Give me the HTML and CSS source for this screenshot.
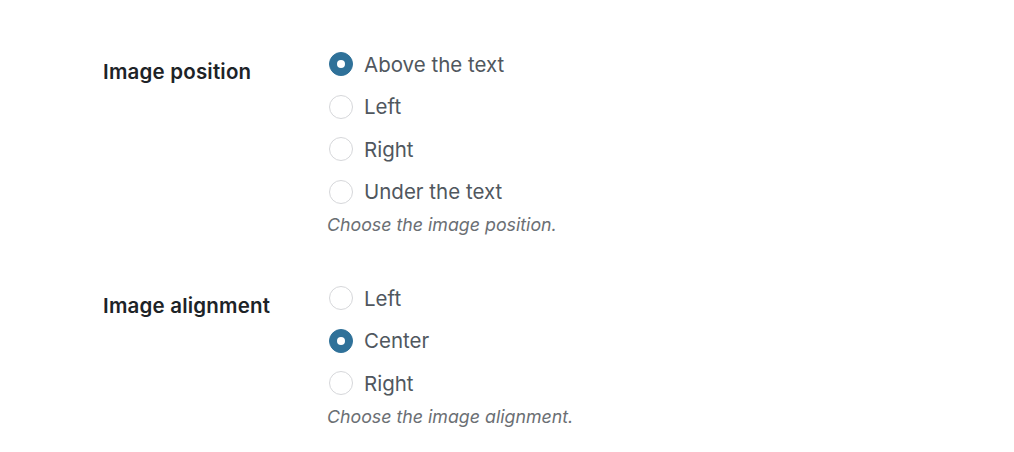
FILE: index.html
```html
<!DOCTYPE html>
<html lang="en">
<head>
  <meta charset="UTF-8" />
  <title>Image settings</title>
  <link rel="stylesheet" href="styles.css">
</head>
<body>

<div class="settings">
  <div class="field field-prev">
    <div class="field-label"></div>
    <div class="field-body">
      <p class="description">Upload an image to display.</p>
    </div>
  </div>

  <div class="field">
    <div class="field-label">Image position</div>
    <div class="field-body">
      <label class="option"><input type="radio" name="position" checked /> Above the text</label>
      <label class="option"><input type="radio" name="position" /> Left</label>
      <label class="option"><input type="radio" name="position" /> Right</label>
      <label class="option"><input type="radio" name="position" /> Under the text</label>
      <p class="description">Choose the image position.</p>
    </div>
  </div>

  <div class="field">
    <div class="field-label">Image alignment</div>
    <div class="field-body">
      <label class="option"><input type="radio" name="align" /> Left</label>
      <label class="option"><input type="radio" name="align" checked /> Center</label>
      <label class="option"><input type="radio" name="align" /> Right</label>
      <p class="description">Choose the image alignment.</p>
    </div>
  </div>
</div>

</body>
</html>
```

FILE: styles.css
```css
body {
  margin: 0;
  background: #fff;
  font-family: Inter, "Noto Sans", sans-serif;
  overflow: hidden;
}
.settings {
  padding-left: 103px;
  margin-top: -22px;
}
.field {
  display: grid;
  grid-template-columns: 224px 1fr;
  margin-bottom: 41px;
}
.field-prev {
  margin-bottom: 42px;
}
.field-label {
  padding-top: 18px;
  font-size: 20.5px;
  line-height: 22px;
  font-weight: 600;
  letter-spacing: 0.2px;
  color: #1d2327;
}
.field-prev .field-label {
  padding-top: 0;
}
.field-body {
  display: flex;
  flex-direction: column;
}
.option {
  display: flex;
  align-items: center;
  height: 42.5px;
  padding-left: 2px;
  font-size: 20.5px;
  color: #50575e;
  cursor: pointer;
}
.option input {
  appearance: none;
  -webkit-appearance: none;
  width: 24px;
  height: 24px;
  margin: 0 11px 0 0;
  border: 1px solid #d6d7da;
  border-radius: 50%;
  background: #fff;
  display: flex;
  align-items: center;
  justify-content: center;
  box-sizing: border-box;
}
.option input:checked {
  background: #2f7199;
  border-color: #2f7199;
}
.option input:checked::before {
  content: "";
  width: 8px;
  height: 8px;
  border-radius: 50%;
  background: #fff;
}
.description {
  margin: 0;
  padding-top: 1px;
  font-size: 17.8px;
  line-height: 22px;
  font-style: italic;
  color: #6b6f74;
}
```
